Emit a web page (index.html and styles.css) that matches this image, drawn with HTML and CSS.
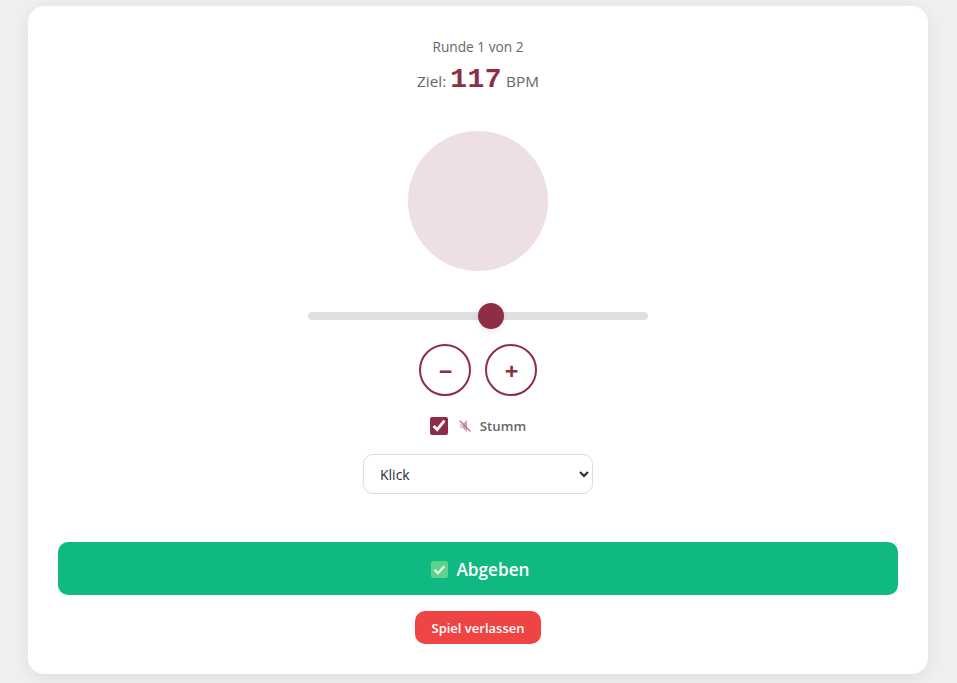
FILE: index.html
```html
<!DOCTYPE html>
<html lang="de">
<head>
  <meta charset="UTF-8">
  <meta name="viewport" content="width=device-width, initial-scale=1.0">
  <title>Tempo Spiel</title>
  <link rel="stylesheet" href="styles.css">
</head>
<body>
  <main class="card">
    <p class="round">Runde 1 von 2</p>
    <p class="target">Ziel: <span class="bpm-value">117</span> BPM</p>

    <div class="pulse"></div>

    <input class="slider" type="range" min="30" max="191" value="117">

    <div class="steppers">
      <button class="step" type="button">−</button>
      <button class="step" type="button">+</button>
    </div>

    <label class="mute">
      <input type="checkbox" checked>
      <svg class="mute-icon" width="14" height="14" viewBox="0 0 14 14">
        <path d="M2 5h3l4-4v12l-4-4H2z" fill="#d3ced2"/>
        <path d="M5 5l4-4v12L5 9z" fill="#b3adb2"/>
        <path d="M1.500 1.500L12.500 12.500" stroke="#ea5b93" stroke-width="1.200" fill="none"/>
      </svg>
      <span>Stumm</span>
    </label>

    <select class="sound">
      <option>Klick</option>
      <option>Beep</option>
      <option>Trommel</option>
    </select>

    <button class="submit" type="button">
      <svg width="17" height="17" viewBox="0 0 17 17">
        <rect width="17" height="17" rx="2.500" fill="#5fd38d"/>
        <path d="M3.500 8.800l3.400 3.400 6.500-7" stroke="#fff" stroke-width="2" fill="none"/>
      </svg>
      Abgeben
    </button>

    <button class="leave" type="button">Spiel verlassen</button>
  </main>
</body>
</html>
```

FILE: styles.css
```css
body {
  margin: 0;
  min-height: 100vh;
  background-color: #f0f0f0;
  font-family: "Open Sans", "Noto Sans", Arial, sans-serif;
  color: #666;
}

.card {
  box-sizing: border-box;
  width: 900px;
  margin: 6px 0 0 28px;
  padding: 30px;
  display: flex;
  flex-direction: column;
  align-items: center;
  background: #fff;
  border-radius: 16px;
  box-shadow: 0 4px 20px rgba(0, 0, 0, 0.08);
}

.round {
  margin: 0;
  height: 22px;
  line-height: 22px;
  font-size: 13.700px;
}

.target {
  margin: 6px 0 0;
  height: 32px;
  line-height: 32px;
  font-size: 15.300px;
}

.bpm-value {
  font-family: "Liberation Mono", "Courier New", monospace;
  font-size: 28px;
  font-weight: 700;
  letter-spacing: 0.500px;
  color: #8e2d45;
}

.pulse {
  width: 140px;
  height: 140px;
  margin-top: 35px;
  border-radius: 50%;
  background: #eddfe3;
}

.slider {
  -webkit-appearance: none;
  appearance: none;
  display: block;
  width: 340px;
  height: 8px;
  margin: 41px 0 0;
  border-radius: 4px;
  background: #e0e0e0;
  outline: none;
}

.slider::-webkit-slider-thumb {
  -webkit-appearance: none;
  appearance: none;
  width: 26px;
  height: 26px;
  border-radius: 50%;
  background: #8e2d45;
  box-shadow: 0 2px 6px rgba(0, 0, 0, 0.1);
}

.steppers {
  display: flex;
  gap: 14px;
  margin-top: 24px;
}

.step {
  box-sizing: border-box;
  width: 52px;
  height: 52px;
  padding: 0 0 0 1px;
  border: 2px solid #8e2d45;
  border-radius: 50%;
  background: #fff;
  color: #8e2d45;
  font-family: inherit;
  font-size: 24px;
  font-weight: 700;
}

.mute {
  display: flex;
  align-items: center;
  gap: 10px;
  margin-top: 21px;
  height: 18px;
  font-size: 13.300px;
  font-weight: 600;
}

.mute input {
  width: 18px;
  height: 18px;
  margin: 0;
  accent-color: #8e2d45;
}

.mute-icon {
  margin-right: -2px;
}

.sound {
  box-sizing: border-box;
  width: 230px;
  height: 40px;
  margin-top: 19px;
  padding: 0 12px;
  border: 1px solid #ddd;
  border-radius: 10px;
  background: #fff;
  color: #1f2d3d;
  font-family: inherit;
  font-size: 14px;
}

.submit {
  width: 100%;
  height: 53px;
  margin-top: 48px;
  padding: 1px 0 0 5px;
  display: flex;
  align-items: center;
  justify-content: center;
  gap: 8px;
  border: 0;
  border-radius: 10px;
  background: #10b981;
  color: #fff;
  font-family: inherit;
  font-size: 17.200px;
  font-weight: 600;
}

.leave {
  width: 126px;
  height: 33px;
  margin-top: 16px;
  padding: 0;
  border: 0;
  border-radius: 10px;
  background: #ef4444;
  color: #fff;
  font-family: inherit;
  font-size: 13px;
  font-weight: 600;
}
```
